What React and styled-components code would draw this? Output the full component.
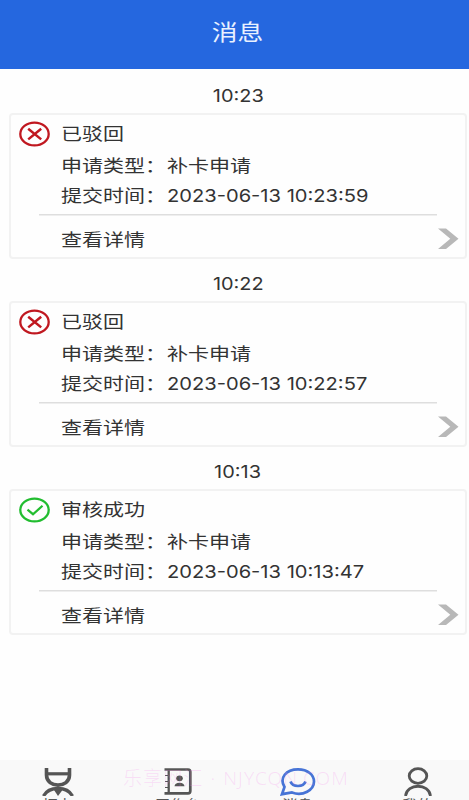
import React from 'react';
import styled, { createGlobalStyle } from 'styled-components';

const Global = createGlobalStyle`
  * { box-sizing: border-box; }
  html, body { margin: 0; background: #fefefe; overflow: hidden; }
  body { font-family: Inter, "Noto Sans CJK SC", sans-serif; color: #333; }
`;

const Screen = styled.div`
  height: 800px;
  display: flex;
  flex-direction: column;
  overflow: hidden;
  background: #fefefe;
`;
const Header = styled.header`
  height: 68.5px;
  flex: none;
  display: flex;
  justify-content: center;
  padding: 18px 0 0 7px;
  background: #2567df;
  color: #e9f1ff;
`;
const Wide = styled.span`
  display: block;
  width: max-content;
  white-space: pre;
  font-size: ${(p) => p.$size || 17.3}px;
  line-height: 28px;
  transform: scaleX(${(p) => p.$stretch || 1.215});
  transform-origin: ${(p) => p.$origin || 'left'} center;
`;
const Digits = styled(Wide)`
  font-size: 17.5px;
`;
const Feed = styled.main`
  flex: 1;
  padding: 0 2px 0 9px;
`;
const Group = styled.section`
  height: 188px;
`;
const Stamp = styled.div`
  height: 44.5px;
  padding-top: 13px;
  display: flex;
  justify-content: center;
`;
const Card = styled.article`
  height: 146px;
  border: 2px solid #f2f2f2;
  border-radius: 4px;
  display: grid;
  grid-template-columns: 50px 1fr;
  grid-template-rows: 36px 30px 33px 1fr;
`;
const Status = styled.div`
  padding: 6px 0 0 8px;
  svg { display: block; }
`;
const Line = styled.div`
  grid-column: 2;
  display: grid;
  grid-template-columns: 106px 1fr;
  padding-top: ${(p) => p.$top}px;
`;
const Footer = styled.div`
  grid-column: 1 / 3;
  margin-left: 28px;
  display: flex;
  justify-content: space-between;
  padding: 12px 6px 0 22px;
  background: linear-gradient(#dedede, #dedede) 0 0 / 398px 1.5px no-repeat;
  svg { margin-top: 2px; }
`;
const TabBar = styled.nav`
  position: relative;
  height: 40px;
  flex: none;
  display: grid;
  grid-template-columns: repeat(4, 120px);
  margin-left: -2px;
  background: #f9f9f9;
`;
const Tab = styled.div`
  display: flex;
  flex-direction: column;
  align-items: center;
  padding-top: 7px;
  color: ${(p) => (p.$active ? '#4774d6' : '#555')};
  svg { display: block; flex: none; }
`;
const TabLabel = styled(Wide)`
  line-height: 16px;
  margin-top: 1px;
  color: #555;
`;
const Watermark = styled.div`
  position: absolute;
  left: 125px;
  top: 4px;
  display: flex;
  gap: 7px;
  font: 300 19px/28px "Noto Sans", "Noto Sans CJK SC", sans-serif;
  letter-spacing: 1.1px;
  color: rgba(245, 130, 235, 0.22);
  white-space: pre;
`;

function StatusIcon({ ok }) {
  return (
    <svg width="32" height="28" viewBox="0 0 32 28" fill="none" stroke={ok ? '#22bd30' : '#c01820'}>
      <ellipse cx="15.5" cy="13" rx="14.2" ry="11.4" strokeWidth="2.3" />
      {ok ? <path d="M8.5 12.7L14 17.2L23.5 8.8" strokeWidth="2.2" /> : <path d="M9.2 7.8L22.2 18.4M22.2 7.8L9.2 18.4" strokeWidth="2.5" />}
    </svg>
  );
}

const Chevron = () => (
  <svg width="21" height="22" viewBox="0 0 21 22" fill="#b8b8b8">
    <path d="M0 .5H8L20.5 10.7L8 21H0L12.3 10.7Z" />
  </svg>
);

const PunchIcon = () => (
  <svg width="34" height="29" viewBox="0 0 34 29" fill="none" stroke="#555">
    <path d="M5.5 1V8C5.5 21.5 28.5 21.5 28.5 8V1" strokeWidth="3.6" />
    <path d="M5.5 6.8H28.5" strokeWidth="3.2" />
    <path d="M2.5 29C8 19 26 19 31.5 29" strokeWidth="3.4" />
    <path d="M13 23H21.5L17 29Z" fill="#555" stroke="none" />
  </svg>
);
const BookIcon = () => (
  <svg width="30" height="29" viewBox="0 0 30 29" fill="none" stroke="#555">
    <path d="M1.5 2.5H25Q27.3 2.5 27.3 4.8V24Q27.3 26.3 25 26.3H1.5" strokeWidth="2.7" />
    <path d="M5.7 2V26" strokeWidth="2.3" />
    <path d="M2 8.5H5M2 14.5H5M2 20.5H5" strokeWidth="1.2" />
    <ellipse cx="16.5" cy="11.3" rx="3.3" ry="2.9" fill="#555" stroke="none" />
    <path d="M11.5 19.3Q11.8 15.8 16.5 15.8T21.5 19.3Z" fill="#555" stroke="none" />
  </svg>
);
const ChatIcon = () => (
  <svg width="36" height="29" viewBox="0 0 36 29" fill="none" stroke="currentColor" strokeWidth="2.7">
    <path d="M4.5 20C-1 11 6 2.3 18 2.3C28 2.3 34 8 34 14.5C34 23 23 29.5 12 25.5L2 27.2Z" />
    <path d="M10.5 14.5C12.5 20.5 23.5 20.5 25.5 14.5" />
  </svg>
);
const UserIcon = () => (
  <svg width="30" height="29" viewBox="0 0 30 29" fill="none" stroke="#555" strokeWidth="2.8">
    <ellipse cx="15" cy="9" rx="8.8" ry="7.3" />
    <path d="M2.5 29C4 16 26 16 27.5 29" />
  </svg>
);

const messages = [
  { time: '10:23', state: '已驳回', submitted: '2023-06-13 10:23:59' },
  { time: '10:22', state: '已驳回', submitted: '2023-06-13 10:22:57' },
  { time: '10:13', state: '审核成功', submitted: '2023-06-13 10:13:47', ok: true },
];
const tabs = [
  { label: '打卡', Icon: PunchIcon },
  { label: '工作台', Icon: BookIcon },
  { label: '消息', Icon: ChatIcon, active: true },
  { label: '我的', Icon: UserIcon },
];

function Message({ time, state, submitted, ok }) {
  return (
    <Group>
      <Stamp><Digits $origin="center" $stretch={1.14}>{time}</Digits></Stamp>
      <Card>
        <Status><StatusIcon ok={ok} /></Status>
        <Line $top={5}><Wide>{state}</Wide></Line>
        <Line $top={1}><Wide>申请类型：</Wide><Wide>补卡申请</Wide></Line>
        <Line $top={1}><Wide>提交时间：</Wide><Digits $stretch={1.15}>{submitted}</Digits></Line>
        <Footer><Wide>查看详情</Wide><Chevron /></Footer>
      </Card>
    </Group>
  );
}

export default function App() {
  return (
    <>
      <Global />
      <Screen>
        <Header><Wide $size={21.5} $origin="center" $stretch={1.2}>消息</Wide></Header>
        <Feed>{messages.map((m) => <Message key={m.time} {...m} />)}</Feed>
        <TabBar>
          {tabs.map(({ label, Icon, active }) => (
            <Tab key={label} $active={active}>
              <Icon />
              <TabLabel $size={12.5} $origin="center">{label}</TabLabel>
            </Tab>
          ))}
          <Watermark><span>乐享网汇</span><span>·</span><span>NJYCQN.COM</span></Watermark>
        </TabBar>
      </Screen>
    </>
  );
}
